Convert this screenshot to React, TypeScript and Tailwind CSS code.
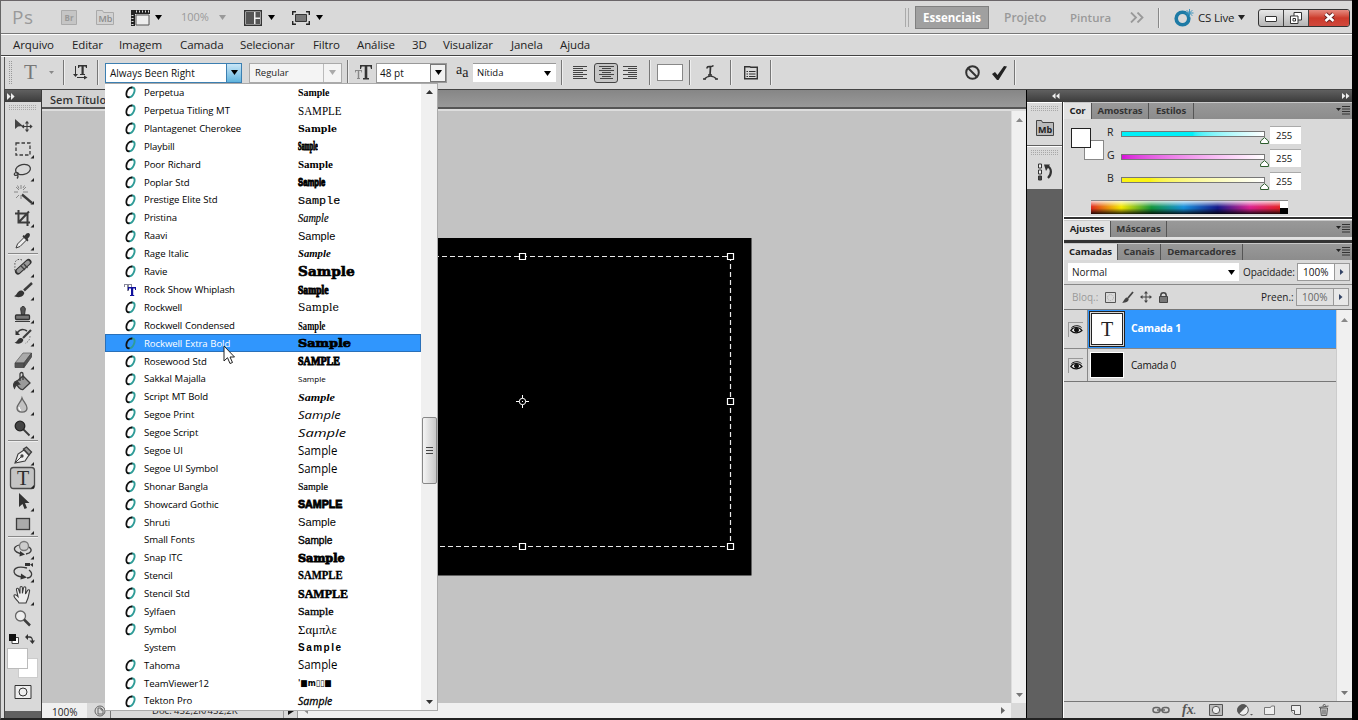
import type { ReactNode } from 'react'
import clsx from 'clsx'

type FontItem = {
  name: string
  kind?: 'o' | 'tt' | 'none'
  text?: string
  cls: string
}

const serif = "font-['Liberation_Serif',serif]"
const slab = "font-['DejaVu_Serif',serif]"
const sans = "font-['Liberation_Sans',sans-serif]"
const script = "font-['Open_Sans',sans-serif] italic"

const fonts: FontItem[] = [
  { name: 'Perpetua', cls: clsx(serif, 'text-[11px] font-bold scale-x-[0.9]') },
  { name: 'Perpetua Titling MT', text: 'SAMPLE', cls: clsx(serif, 'text-[12px] scale-x-[0.92]') },
  { name: 'Plantagenet Cherokee', cls: clsx(slab, 'text-[10px] font-bold scale-x-[0.94]') },
  { name: 'Playbill', cls: clsx(serif, 'text-[11.5px] font-black scale-x-[0.54] [-webkit-text-stroke:0.9px_#000]') },
  { name: 'Poor Richard', cls: clsx(serif, 'text-[11px] font-bold') },
  { name: 'Poplar Std', cls: clsx(sans, 'text-[11px] font-black scale-x-[0.7] [-webkit-text-stroke:1px_#000]') },
  { name: 'Prestige Elite Std', cls: "font-['Liberation_Mono',monospace] text-[11.5px] [-webkit-text-stroke:0.2px_#000] scale-x-[1.02]" },
  { name: 'Pristina', cls: clsx(serif, 'text-[12.5px] italic scale-x-[0.83] [-webkit-text-stroke:0.2px_#000]') },
  { name: 'Raavi', cls: clsx(sans, 'text-[11px]') },
  { name: 'Rage Italic', cls: clsx(serif, 'text-[10px] italic font-bold scale-x-[1.07]') },
  { name: 'Ravie', cls: clsx(slab, 'text-[12px] font-bold [-webkit-text-stroke:0.6px_#000] scale-x-[1.14]') },
  { name: 'Rock Show Whiplash', kind: 'tt', cls: clsx(serif, 'text-[13px] font-bold [-webkit-text-stroke:1px_#000] scale-x-[0.74]') },
  { name: 'Rockwell', cls: clsx(slab, 'text-[11px] scale-x-[0.98]') },
  { name: 'Rockwell Condensed', cls: clsx(serif, 'text-[12px] font-bold scale-x-[0.72]') },
  { name: 'Rockwell Extra Bold', cls: clsx(slab, 'text-[11px] font-bold [-webkit-text-stroke:0.7px_#000] scale-x-[1.16]') },
  { name: 'Rosewood Std', text: 'SAMPLE', cls: clsx(serif, 'text-[12px] font-bold [-webkit-text-stroke:0.9px_#000] scale-x-[0.84]') },
  { name: 'Sakkal Majalla', cls: "font-['Open_Sans',sans-serif] text-[8px]" },
  { name: 'Script MT Bold', cls: clsx(serif, 'text-[11px] font-bold italic scale-x-[1.1]') },
  { name: 'Segoe Print', cls: clsx(script, 'text-[11.5px] scale-x-[1.14]') },
  { name: 'Segoe Script', cls: clsx(script, 'text-[11.5px] scale-x-[1.28]') },
  { name: 'Segoe UI', cls: 'text-[12px] scale-x-[0.95]' },
  { name: 'Segoe UI Symbol', cls: 'text-[12px] scale-x-[0.95]' },
  { name: 'Shonar Bangla', cls: clsx(serif, 'text-[10px] [-webkit-text-stroke:0.2px_#000]') },
  { name: 'Showcard Gothic', text: 'SAMPLE', cls: clsx(sans, 'text-[11px] font-black [-webkit-text-stroke:0.8px_#000] scale-x-[0.97]') },
  { name: 'Shruti', cls: clsx(sans, 'text-[11px] scale-x-[1.02]') },
  { name: 'Small Fonts', kind: 'none', cls: clsx(sans, 'text-[11px] [-webkit-text-stroke:0.4px_#000] scale-x-[0.92]') },
  { name: 'Snap ITC', cls: clsx(slab, 'text-[10.5px] font-bold [-webkit-text-stroke:0.8px_#000] scale-x-[1.07]') },
  { name: 'Stencil', text: 'SAMPLE', cls: clsx(serif, 'text-[11.5px] font-bold [-webkit-text-stroke:0.3px_#000] scale-x-[0.93]') },
  { name: 'Stencil Std', text: 'SAMPLE', cls: clsx(serif, 'text-[12px] font-bold [-webkit-text-stroke:0.5px_#000]') },
  { name: 'Sylfaen', cls: clsx(serif, 'text-[11px] [-webkit-text-stroke:0.3px_#000] scale-x-[1.08]') },
  { name: 'Symbol', text: 'Σαμπλε', cls: clsx(serif, 'text-[12px] scale-x-[1.06]') },
  { name: 'System', kind: 'none', cls: clsx(sans, 'text-[10px] font-bold tracking-[1.5px]') },
  { name: 'Tahoma', cls: 'text-[12px] scale-x-[0.95]' },
  { name: 'TeamViewer12', text: "'■m▯▯■", cls: "font-['DejaVu_Sans',sans-serif] text-[9px] font-bold scale-x-[0.86]" },
  { name: 'Tekton Pro', cls: clsx(script, 'text-[10.5px] [-webkit-text-stroke:0.3px_#000]') },
]

const menus = [
  { label: 'Arquivo', w: 'w-[59px]' },
  { label: 'Editar', w: 'w-[47px]' },
  { label: 'Imagem', w: 'w-[61px]' },
  { label: 'Camada', w: 'w-[60px]' },
  { label: 'Selecionar', w: 'w-[73px]' },
  { label: 'Filtro', w: 'w-[44px]' },
  { label: 'Análise', w: 'w-[55px]' },
  { label: '3D', w: 'w-[31px]' },
  { label: 'Visualizar', w: 'w-[68px]' },
  { label: 'Janela', w: 'w-[49px]' },
  { label: 'Ajuda', w: 'w-[50px]' },
]

const channels = [
  { label: 'R', bar: 'bg-gradient-to-r from-[#00f0f8] from-50% to-white' },
  { label: 'G', bar: 'bg-gradient-to-r from-[#d80cd8] to-white' },
  { label: 'B', bar: 'bg-gradient-to-r from-[#fbf413] from-20% to-white' },
]

function Down({ className = 'fill-black' }: { className?: string }) {
  return (
    <svg width="7" height="5" viewBox="0 0 7 5" className={clsx('shrink-0', className)}>
      <path d="M0 0h7L3.500 5z" />
    </svg>
  )
}

function Up({ className = 'fill-[#333]' }: { className?: string }) {
  return (
    <svg width="7" height="4" viewBox="0 0 7 4" className={className}>
      <path d="M0 4h7L3.500 0z" />
    </svg>
  )
}

function Sep() {
  return <div className="h-[25px] w-[2px] shrink-0 border-l border-[#777] bg-[#eee]" />
}

function Grip() {
  return (
    <svg width="28" height="5" viewBox="0 0 28 5" stroke="#a8a8a8" strokeDasharray="1 1">
      <path d="M0 .5h28M0 2.500h28M0 4.500h28" />
    </svg>
  )
}

// one slot of the tool palette, drawn in a 36x23 box
function Tool({ children, corner = true, tall }: { children: ReactNode; corner?: boolean; tall?: boolean }) {
  return (
    <svg width="36" height="23" viewBox="0 0 36 23" fill="none" stroke="#3c3c3c" strokeWidth="1.3" className="shrink-0 overflow-visible">
      {tall && <rect x="5.500" y=".5" width="24" height="21" rx="3" fill="#c4c4c4" stroke="#4a4a4a" />}
      {children}
      {corner && <path d="M29 18v3.500h-3.500z" fill="#222" stroke="none" />}
    </svg>
  )
}

function ToolLine() {
  return <div className="mx-[3px] h-[2px] shrink-0 border-t border-[#888] bg-[#eee]" />
}

function Toolbar() {
  return (
    <div className="flex w-[37px] shrink-0 flex-col border-r border-[#3a3a3a] bg-[#d9d9d9]">
      <div className="flex h-[12px] shrink-0 items-center bg-gradient-to-b from-[#606060] to-[#3c3c3c] pl-[2px]">
        <svg width="8" height="7" viewBox="0 0 8 7" fill="#eee"><path d="M0 0l3.600 3.500L0 7zM4 0l3.600 3.500L4 7z" /></svg>
      </div>
      <div className="flex h-[12px] shrink-0 justify-center pt-[3px]"><Grip /></div>

      <div className="flex h-[139px] shrink-0 flex-col">
        <Tool corner={false}>
          <path d="M10 5v10l3-2.600 5-.5z" fill="#444" stroke="none" />
          <path d="M22 8v9M17.500 12.500h9M20.500 9.500L22 7.700l1.500 1.800M20.500 15.500l1.500 1.800 1.500-1.800M19 11l-1.800 1.500L19 14M25 11l1.800 1.500L25 14" strokeWidth="1.100" />
        </Tool>
        <Tool><rect x="11" y="6" width="14" height="12" strokeDasharray="3.500 2" /></Tool>
        <Tool>
          <ellipse cx="18" cy="9.500" rx="7.500" ry="5" transform="rotate(-12 18 9.500)" />
          <path d="M11 12.500c-3 1-1.500 4 1 2.500s1-2.500-.5-2.200M12.500 14.500c1 2 .5 3-.5 4" />
        </Tool>
        <Tool>
          <path d="M17 11.500l10 8.500" strokeWidth="2.300" />
          <path d="M16 2v4M16 12v4M9 9h4M18 9h5M11 4l3 3M21 4l-3 3M11 15l3-3M12.500 2.500l1.500 3M19.500 2.500L18 5" stroke="#888" strokeWidth="1" />
        </Tool>
        <Tool>
          <path d="M13.500 4v12.500H25M10 7.500h12.500V20M13.500 16.500L24 5.500" strokeWidth="2" />
        </Tool>
        <Tool>
          <path d="M11 19l1.500-4 7-7 2.500 2.500-7 7z" fill="#eee" strokeWidth="1" />
          <path d="M17.500 7.500l5 5 1-1.500-1-1 2-2.500c1.500-3-1-4.500-3-3l-2 2.200-1-.7z" fill="#333" stroke="none" />
        </Tool>
      </div>
      <ToolLine />

      <div className="flex h-[185px] shrink-0 flex-col pt-[1px]">
        <Tool>
          <path d="M17 4c-4-2-8 1-7 5 0 4-1 5 1 7" stroke="#555" strokeWidth="1" strokeDasharray="1.500 1.500" />
          <path d="M13 15.500L23.500 6" stroke="#333" strokeWidth="6" strokeLinecap="round" />
          <path d="M13.500 15L23 6.500" stroke="#999" strokeWidth="3.800" strokeLinecap="round" />
          <path d="M16 10l4 4M19 8l3.500 4" stroke="#444" />
        </Tool>
        <Tool>
          <path d="M19 11.500L27 4" strokeWidth="2.400" />
          <path d="M9 17c3-.5 3-5 7-5.500 2 0 4 2 3 3.500-1.500 3.500-7 4-10 2z" fill="#333" stroke="none" />
        </Tool>
        <Tool>
          <path d="M16 9c-2-6 6-6 4 0l-.5 4h-3z" fill="#555" stroke="#333" strokeWidth="1" />
          <rect x="10.500" y="13" width="14" height="4.500" rx="1" fill="#777" stroke="#333" />
          <path d="M10 19.500h15" strokeWidth="1" />
        </Tool>
        <Tool>
          <path d="M18 13L26 5" strokeWidth="2.200" />
          <path d="M9.500 17.500c3-.5 3-4 6-4.500 2 0 3.500 1.500 2.500 3-1.500 3-5.500 3.500-8.500 1.500z" fill="#333" stroke="none" />
          <path d="M12 8c3-4 7-4 10-2" strokeWidth="1.600" /><path d="M10.500 5v5h4.500z" fill="#333" stroke="none" />
          <path d="M25 11c0 4-2 6-5 7.500" stroke="#777" strokeDasharray="1.500 1.500" strokeWidth="1" />
        </Tool>
        <Tool>
          <path d="M10 15l8-10h8.500l-7.500 10z" fill="#aaa" stroke="#666" strokeWidth=".8" />
          <path d="M10 15h9v4.500h-9zM19 15l7.500-10v4L19 19.500z" fill="#555" stroke="#444" strokeWidth=".8" />
        </Tool>
        <Tool>
          <path d="M11 11l7-6 7 7-7 6.500c-2 1-7-4-7-7.500z" fill="#999" />
          <path d="M15 10V3c0-2 3-2 3 0v6" /><path d="M12 10c-4 1-4 5-2.500 7 1-3 2-4 5-4z" fill="#333" />
        </Tool>
        <Tool>
          <path d="M17 4c1.500 4 5 6.500 5 10 0 5.500-10 5.500-10 0 0-3.500 4-6 5-10z" fill="#c2c2c2" stroke="#666" />
          <path d="M14 13c0 2 1 3 2 3.500" stroke="#fff" />
        </Tool>
        <Tool><path d="M18.500 12.500l6 6" strokeWidth="1.800" /><circle cx="15" cy="9" r="4.800" fill="#444" stroke="#222" /></Tool>
      </div>
      <ToolLine />

      <div className="flex h-[94px] shrink-0 flex-col pt-[2px]">
        <Tool>
          <path d="M10 19l3-9 6-4 5 5-4 6z" fill="#eee" strokeWidth="1.100" /><path d="M10.500 18.500l6-6" strokeWidth="1" />
          <circle cx="17" cy="12" r="1" fill="#444" /><path d="M18.500 5l3-2 5 5-2.500 3z" fill="#999" />
        </Tool>
        <Tool tall>
          <text x="12" y="18" fill="#2c2c2c" stroke="none" className="font-['Liberation_Serif',serif] text-[20px]">T</text>
        </Tool>
        <Tool><path d="M14 3v14l3.500-3 2 5 2.500-1-2-5h4.500z" fill="#333" stroke="none" /></Tool>
        <Tool><rect x="11.500" y="5.500" width="13" height="11" fill="#aaa" /></Tool>
      </div>
      <ToolLine />

      <div className="flex h-[92px] shrink-0 flex-col">
        <Tool>
          <circle cx="19" cy="8" r="4.500" fill="#ccc" stroke="#777" />
          <path d="M14 7c-7 2-6 7 3 9M24 9c4 3 2 6-3 7" /><path d="M15 13l5 3.500-5.500 2z" fill="#333" stroke="none" />
        </Tool>
        <Tool>
          <path d="M22 7C11 4 7 9 10 13c2 2 5 3 9 3M24 9c5 4 2 8-2 8" /><path d="M16 12.500l6 4-6.500 2zM20 2h5v3h-5zM25 3.500L28 2v4z" fill="#333" stroke="none" />
        </Tool>
        <Tool>
          <path d="M14 19c-1-2-5-5-5-7s2-1.500 4 .5L11.500 6c-.4-2 1.700-2.400 2.200-.5L15 9.500V4c0-2 2.400-2 2.400 0v5.300L18.500 4c.4-2 2.600-1.500 2.300.4L20.500 10l2-3.500c1-1.500 2.600-.6 2 1L23 14l-2 5z" fill="#eee" strokeWidth="1.100" />
        </Tool>
        <Tool corner={false}>
          <circle cx="15.500" cy="9" r="5" fill="#eee" stroke="#666" /><path d="M19 12.500l6 6" strokeWidth="2.500" />
        </Tool>
      </div>

      <div className="flex h-[17px] shrink-0 items-center justify-between pl-[4px] pr-[6px]">
        <svg width="10" height="10" viewBox="0 0 10 10"><path d="M6 3.500h3.500v6H3V7" fill="#fff" stroke="#444" /><path d="M0 0h7v7H0z" fill="#111" /></svg>
        <svg width="10" height="10" viewBox="0 0 10 10" fill="none" stroke="#333" strokeWidth="1.300"><path d="M2 3h2.500C7 3 7.500 4.500 7.500 8" /><path d="M3 0v6L0 3zM4.500 6.500h5.500L7.500 10z" fill="#333" stroke="none" /></svg>
      </div>
      <div className="relative h-[33px] shrink-0">
        <div className="absolute left-[13px] top-[11px] size-[20px] border border-[#ccc] bg-white" />
        <div className="absolute left-[2px] top-[1px] size-[21px] border border-[#bbb] bg-white" />
      </div>
      <div className="flex h-[31px] shrink-0 justify-center pt-[5px]">
        <svg width="18" height="14" viewBox="0 0 18 14" fill="#eee" stroke="#333"><path d="M1 .5h16v13H1z" /><circle cx="9" cy="7" r="4" /></svg>
      </div>
      <div className="flex-1 bg-[#606060]" />
    </div>
  )
}

function AppBar() {
  return (
    <div className="flex h-[33px] shrink-0 items-center border-b border-[#777] pl-[11px] pt-[1px]">
      <span className="w-[49px] text-[19px] leading-none tracking-[0.5px] text-[#999]">Ps</span>
      <svg width="16" height="15" viewBox="0 0 16 15" className="mr-[19px]">
        <path d="M.5.500h15v14H.5z" fill="#c5c5c5" stroke="#aaa" />
        <text x="3.500" y="11" fill="#999" className="text-[8px] font-bold">Br</text>
      </svg>
      <svg width="18" height="15" viewBox="0 0 18 15" className="mr-[17px]">
        <path d="M.5.500h6l1 2h10v12H.5z" fill="#d2d2d2" stroke="#aaa" />
        <text x="2.500" y="12" fill="#8c8c8c" className="text-[9px] font-semibold">Mb</text>
      </svg>
      <svg width="19" height="16" viewBox="0 0 19 16" className="mr-[5px]">
        <path d="M5 5h13v10H5z" fill="#eee" stroke="#555" />
        <path d="M0 0h19v4H4v12H0z" fill="#222" />
        <path d="M5 1.500h14" stroke="#ddd" strokeDasharray="1 2" strokeWidth="2" /><path d="M1.500 5v11" stroke="#ddd" strokeDasharray="1 2" strokeWidth="2" />
      </svg>
      <Down />
      <span className="ml-[19px] w-[38px] text-[11px] text-[#999]">100%</span>
      <Down className="fill-[#999]" />
      <svg width="18" height="16" viewBox="0 0 18 16" className="ml-[18px] mr-[6px]">
        <path d="M.7.700h16.600v14.600H.7z" fill="#eee" stroke="#333" strokeWidth="1.400" />
        <path d="M2 2h8v12H2zM11.500 2H16v5.500h-4.500zM11.500 9H16v5h-4.500z" fill="#555" />
      </svg>
      <Down />
      <svg width="18" height="14" viewBox="0 0 18 14" className="ml-[17px] mr-[6px]">
        <path d="M.7 4V.7H4M14 .7h3.300V4M17.300 10v3.300H14M4 13.300H.7V10" fill="none" stroke="#222" strokeWidth="1.400" />
        <path d="M3.500 3.500h11v7h-11z" fill="#777" stroke="#333" />
      </svg>
      <Down />

      <div className="ml-[582px] flex h-[19px] w-[4px] border-x border-[#aaa]" />
      <div className="ml-[6px] flex h-[23px] w-[74px] items-center justify-center border border-[#808080] bg-[#a0a0a0] text-[11.5px] font-bold text-white">Essenciais</div>
      <span className="ml-[15px] w-[66px] text-[12px] font-semibold text-[#999]">Projeto</span>
      <span className="w-[60px] text-[11.5px] font-semibold text-[#999]">Pintura</span>
      <svg width="14" height="11" viewBox="0 0 14 11" fill="none" stroke="#999" strokeWidth="1.800"><path d="M1 .5l5 5-5 5M7.500 .5l5 5-5 5" /></svg>
      <div className="ml-[14px] h-[20px] w-[2px] border-l border-[#888] bg-[#eee]" />
      <svg width="20" height="18" viewBox="0 0 20 18" className="ml-[14px] mr-[4px]" fill="none">
        <circle cx="8.500" cy="9.500" r="6.300" stroke="#1d7aa5" strokeWidth="3.600" />
        <path d="M15.500 0v8M11.500 4h8M12.700 1.200l5.600 5.600M18.300 1.200l-5.600 5.600" stroke="#3b93bd" strokeWidth="1" />
      </svg>
      <span className="w-[40px] whitespace-nowrap text-[11.5px] tracking-[-0.2px] text-[#222]">CS Live</span>
      <Down className="fill-[#222]" />
      <div className="ml-[13px] flex h-[18px] w-[92px] overflow-hidden rounded-[3px] border border-[#333] bg-gradient-to-b from-[#e8e8e8] to-[#b5b5b5]">
        <div className="flex w-[25px] items-center justify-center border-r border-[#444] pt-[2px]"><div className="h-[6px] w-[12px] rounded-[1px] border border-[#333] bg-white" /></div>
        <div className="flex w-[25px] items-center justify-center border-r border-[#444]">
          <svg width="12" height="12" viewBox="0 0 12 12" fill="#fff" stroke="#333"><path d="M4 .5h7.500V8H4z" /><path d="M.5 4H8v7.500H.5z" /><path d="M3 6.500h2.500V9H3z" /></svg>
        </div>
        <div className="flex flex-1 items-center justify-center bg-gradient-to-b from-[#e58a80] via-[#cc3a2b] to-[#d0483c]">
          <svg width="13" height="11" viewBox="0 0 13 11"><path d="M2.500 2l8 7M10.500 2l-8 7" stroke="#622" strokeWidth="4.400" /><path d="M2.500 2l8 7M10.500 2l-8 7" stroke="#fff" strokeWidth="2.600" /></svg>
        </div>
      </div>
    </div>
  )
}

function AlignIcon({ d }: { d: string }) {
  return <svg width="15" height="14" viewBox="0 0 15 14" stroke="#444" strokeWidth="1.100"><path d={d} /></svg>
}

function OptionsBar() {
  return (
    <div className="flex h-[32px] shrink-0 items-center border-l border-[#555] pb-[1px] pl-[4px]">
      <svg width="4" height="24" viewBox="0 0 4 24" stroke="#999" strokeDasharray="1 1"><path d="M.5 0v24M2.500 0v24" /></svg>
      <span className="ml-[11px] w-[25px] font-['Liberation_Serif',serif] text-[21px] leading-none text-[#777]">T</span>
      <svg width="5" height="3" viewBox="0 0 5 3" fill="#888" className="mr-[9px]"><path d="M0 0h5L2.500 3z" /></svg>
      <Sep />
      <svg width="15" height="15" viewBox="0 0 15 15" className="ml-[8px] mr-[9px]" fill="#333">
        <path d="M2 1h1v8h2l-2.500 3L0 9h2zM5 0h9v3h-1l-.5-1.500h-1.800V9H12v1H7V9h1.500V1.500H6.500L6 3H5zM4 12h7v-1.500l3.500 2-3.500 2V13H4z" />
      </svg>
      <Sep />
      <div className="ml-[6px] flex h-[20px] w-[137px] border border-[#3c7fb1] bg-white text-[10px] leading-[18px] text-[#111]">
        <span className="w-[120px] whitespace-nowrap pl-[4px]">Always Been Right</span>
        <span className="flex flex-1 items-center justify-center border-l border-[#3c7fb1] bg-gradient-to-b from-[#c9e6f7] to-[#5fb4dd]"><Down /></span>
      </div>
      <div className="ml-[7px] flex h-[20px] w-[93px] border border-[#aaa] bg-[#f4f4f4] text-[9.5px] leading-[18px] text-[#222]">
        <span className="w-[74px] border-r border-[#bbb] pl-[5px]">Regular</span>
        <span className="flex flex-1 items-center justify-center"><Down className="fill-[#aaa]" /></span>
      </div>
      <div className="w-[5px]" />
      <Sep />
      <svg width="18" height="15" viewBox="0 0 18 15" className="ml-[6px] mr-[3px]" fill="#333">
        <path d="M5 0h12v4h-1l-.7-2.500H12.300V13H14v1.500H8V13h1.700V1.500H6.700L6 4H5z" />
        <path d="M0 5h7v2.500h-.7L6 6H4.200v7H5v1H2v-1h.8V6H1L.7 7.500H0z" fill="#888" />
      </svg>
      <div className="flex h-[20px] w-[71px] border border-[#999] bg-white text-[10px] leading-[18px] text-[#111]">
        <span className="w-[53px] pl-[3px]">48 pt</span>
        <span className="flex flex-1 items-center justify-center border border-[#777] bg-[#f2f2f2]"><Down /></span>
      </div>
      <span className="ml-[9px] flex w-[17px] font-['Liberation_Serif',serif] text-[14px] leading-none text-[#222]"><span className="-mt-[3px]">a</span><span>a</span></span>
      <div className="flex h-[19px] w-[83px] items-center justify-between border-t border-[#999] bg-white pl-[4px] pr-[5px] text-[9.5px] text-[#111]">Nítida<Down /></div>
      <div className="w-[5px]" />
      <Sep />
      <div className="ml-[10px] mr-[6px]"><AlignIcon d="M0 .5h14M0 2.500h10M0 4.500h14M0 6.500h10M0 8.500h14M0 10.500h10M0 12.500h14" /></div>
      <div className="flex h-[20px] w-[24px] items-center justify-center rounded-[3px] border border-[#444] bg-[#c6c6c6]"><AlignIcon d="M0 .5h15M3 2.500h9M0 4.500h15M3 6.500h9M0 8.500h15M3 10.500h9M1 12.500h13" /></div>
      <div className="ml-[5px] mr-[11px]"><AlignIcon d="M0 .5h14M5 2.500h9M0 4.500h14M5 6.500h9M0 8.500h14M5 10.500h9M0 12.500h14" /></div>
      <Sep />
      <div className="ml-[6px] mr-[6px] h-[17px] w-[26px] border border-[#888] bg-white" />
      <Sep />
      <svg width="15" height="17" viewBox="0 0 15 17" className="ml-[12px] mr-[12px]" fill="none" stroke="#333" strokeWidth="1.300">
        <path d="M4 4.500C4 1 8 4 10.500 1.500M7.500 3L7 11M5 11h4" strokeWidth="1.700" /><path d="M1 15.500c4-4.500 9-4.500 13 0M0 15h3M12 15h3" />
      </svg>
      <Sep />
      <svg width="14" height="15" viewBox="0 0 14 15" className="ml-[12px] mr-[12px]" fill="none" stroke="#333" strokeWidth="1.400">
        <path d="M.7 1.700h5l1 .500h6.600v11.500H.7z" /><path d="M5 6.500h6.500M5 9h6.500M5 11.500h6.500M2.500 6.500H4M2.500 9H4M2.500 11.500H4" strokeWidth="1" />
      </svg>
      <Sep />
      <svg width="15" height="15" viewBox="0 0 15 15" className="ml-[193px] mr-[12px]" fill="none" stroke="#333" strokeWidth="2"><circle cx="7.500" cy="7.500" r="6.300" /><path d="M3 3l9 9" /></svg>
      <svg width="15" height="14" viewBox="0 0 15 14" className="mr-[7px]" fill="#222"><path d="M0 8l3-2 2.500 3L12 0l3 .5L6.500 14H5z" /></svg>
      <Sep />
    </div>
  )
}

function FontIcon({ kind }: { kind: FontItem['kind'] }) {
  if (kind === 'none') return null
  if (kind === 'tt') {
    return (
      <svg width="13" height="14" viewBox="0 0 13 14">
        <path d="M0 1h8v3H7V2H5v6H3V2H1v2H0z" fill="#889" />
        <path d="M4 4h8v3h-1V5.500H9.200V12h1V13H6v-1h1V5.500H5V7H4z" fill="#11119c" />
      </svg>
    )
  }
  return (
    <svg width="13" height="13" viewBox="0 0 13 13" fill="none">
      <path d="M7.300 1.700C10.800.8 11.300 4 9.800 7.300 8.600 10 6.800 11.300 5 11.300" stroke="#2f9c98" strokeWidth="1.900" />
      <path d="M8.300 1.500C5 1.300 2.900 4.300 2.400 7.300c-.4 2.600.7 4.200 3.100 3.900" stroke="#111" strokeWidth="1.800" />
    </svg>
  )
}

function FontMenu() {
  return (
    <div className="absolute left-[105px] top-[83px] flex h-[628px] w-[333px] border-y border-r border-[#aaa] bg-white">
      <div className="flex w-[316px] flex-col">
        {fonts.map((f) => {
          const active = f.name === 'Rockwell Extra Bold'
          return (
            <div key={f.name} className={clsx('flex min-h-0 flex-1 items-center', active && 'bg-[#3096fd] inset-ring inset-ring-[#2a70b8]')}>
              <span className="ml-[19px] w-[20px]"><FontIcon kind={f.kind} /></span>
              <span className={clsx('w-[154px] whitespace-nowrap text-[9.6px] leading-none tracking-[-0.1px] [word-spacing:0.4px]', active ? 'text-white' : 'text-black')}>{f.name}</span>
              <span className={clsx('origin-left whitespace-nowrap leading-none text-black', f.cls)}>{f.text ?? 'Sample'}</span>
            </div>
          )
        })}
      </div>
      <div className="flex flex-1 flex-col items-center bg-[#f0f0f0] pt-[6px]">
        <Up />
        <div className="mt-[323px] flex h-[67px] w-[15px] items-center justify-center rounded-[2px] border border-[#888] bg-gradient-to-r from-[#f5f5f5] to-[#c8c8c8]">
          <svg width="7" height="8" viewBox="0 0 7 8" stroke="#444"><path d="M0 .5h7M0 3.500h7M0 6.500h7" /></svg>
        </div>
        <div className="mt-[216px]"><svg width="7" height="4" viewBox="0 0 7 4" fill="#333"><path d="M0 0h7L3.500 4z" /></svg></div>
      </div>
      <svg width="12" height="20" viewBox="0 0 12 20" className="absolute left-[118px] top-[261px]"><path d="M1 1v15l3.500-3.300L7 18.500l2.500-1L7 12h4.500z" fill="#fff" stroke="#222" /></svg>
    </div>
  )
}

function Artboard() {
  return (
    <svg width="459" height="338" viewBox="293 238 459 338" className="absolute left-[251px] top-[148px]" fill="none" stroke="#fff">
      <path d="M293 238h458.500v337.500H293z" fill="#000" stroke="none" />
      <path d="M314 256.500h416.500v290H314z" strokeDasharray="5 3" stroke="#e8e8e8" strokeWidth="1.200" />
      <path d="M519.500 253.500h6v6h-6zM727.500 253.500h6v6h-6zM727.500 398.500h6v6h-6zM727.500 543.500h6v6h-6zM519.500 543.500h6v6h-6z" fill="#000" strokeWidth="1.200" />
      <circle cx="522.500" cy="401.500" r="3.200" />
      <path d="M522.500 395v3.500M522.500 404.500v3.500M516 401.500h3.500M525.500 401.500h3.500" />
      <path d="M522 401h1v1h-1z" fill="#fff" stroke="none" />
    </svg>
  )
}

function Document() {
  return (
    <div className="relative flex min-w-0 flex-1 flex-col overflow-hidden">
      <div className="flex h-[19px] shrink-0 border-b-2 border-[#555] bg-gradient-to-b from-[#868686] to-[#999]">
        <div className="w-[130px] whitespace-nowrap bg-[#d2d2d2] pl-[8px] text-[11px] font-semibold leading-[20px] text-[#333]">Sem Título</div>
      </div>
      <div className="h-[2px] shrink-0 bg-[#ddd]" />
      <div className="flex min-h-0 flex-1">
        <div className="flex-1 bg-[#c3c3c3]" />
        <div className="flex w-[15px] flex-col items-center justify-between border-l border-[#ddd] bg-[#f0f0f0] pb-[6px] pt-[7px]">
          <Up className="fill-[#888]" />
          <svg width="7" height="4" viewBox="0 0 7 4" fill="#777"><path d="M0 0h7L3.500 4z" /></svg>
        </div>
      </div>
      <div className="flex h-[15px] shrink-0 items-center bg-[#d9d9d9] text-[10px] leading-none text-[#222]">
        <span className="flex h-full w-[45px] items-center bg-[#f0f0f0] pl-[10px] pt-[2px] text-[10px]">100%</span>
        <svg width="12" height="12" viewBox="0 0 12 12" className="ml-[7px] mr-[4px]" fill="none" stroke="#666"><circle cx="6" cy="6" r="5" /><path d="M4 9V3h3l2 2v4zM7 3v2h2" /></svg>
        <div className="h-full w-[42px] border-l border-[#777]" />
        <span className="w-[131px] whitespace-nowrap text-[9.5px]">Doc: 452,2K/452,2K</span>
        <div className="flex h-full w-[15px] items-center justify-center border-x border-[#999]"><svg width="6" height="8" viewBox="0 0 6 8" fill="#111"><path d="M0 0v8l6-4z" /></svg></div>
        <div className="flex h-full flex-1 items-center justify-between bg-[#f0f0f0] px-[6px]">
          <svg width="4" height="7" viewBox="0 0 4 7" fill="#888"><path d="M4 0v7L0 3.500z" /></svg>
          <svg width="4" height="7" viewBox="0 0 4 7" fill="#666"><path d="M0 0v7l4-3.500z" /></svg>
        </div>
        <div className="h-full w-[15px]" />
      </div>
      <Artboard />
    </div>
  )
}

function PanelTabs({ tabs }: { tabs: { label: string; w: string }[] }) {
  return (
    <div className="flex h-[17px] shrink-0 items-stretch border-t border-[#c8c8c8] bg-gradient-to-b from-[#999] to-[#8c8c8c] text-[9.6px] font-bold leading-[15px] text-[#222]">
      {tabs.map((t, i) => (
        <div key={t.label} className={clsx('flex justify-center whitespace-nowrap border-r border-[#555] tracking-[-0.1px]', t.w, i === 0 ? 'bg-[#e2e2e2]' : 'text-[#333]')}>{t.label}</div>
      ))}
      <svg width="14" height="9" viewBox="0 0 14 9" className="ml-auto mr-[2px] mt-[3px]"><path d="M0 2h5L2.500 5z" fill="#222" /><path d="M6 .5h8M6 3h8M6 5.500h8M6 8h8" stroke="#333" /></svg>
    </div>
  )
}

function ColorPanel() {
  return (
    <div className="h-[97px] shrink-0 px-[7px] pt-[4px]">
      <div className="flex h-[75px]">
        <div className="relative w-[36px]">
          <div className="absolute left-[13px] top-[17px] size-[20px] border border-[#888] bg-white" />
          <div className="absolute left-0 top-[5px] size-[20px] border border-[#222] bg-white" />
        </div>
        <div className="flex flex-col">
          {channels.map((c) => (
            <div key={c.label} className="flex h-[23px] items-start">
              <span className="w-[14px] pt-[1px] text-[10.5px] leading-[16px] text-[#222]">{c.label}</span>
              <div className="w-[149px] pt-[8px]">
                <div className={clsx('h-[6px] w-[144px] border border-[#777]', c.bar)} />
                <svg width="9" height="7" viewBox="0 0 9 7" className="ml-[139px]"><path d="M4.500 .6L8.400 4v2.500H.6V4z" fill="#fff" stroke="#2c5c2c" /></svg>
              </div>
              <div className="mt-[3px] h-[18px] w-[31px] border-t border-[#aaa] bg-white pl-[6px] text-[9.5px] leading-[17px] text-[#111]">255</div>
            </div>
          ))}
        </div>
      </div>
      <div className="ml-[20px] mt-[2px] flex h-[14px] w-[197px] border-t border-[#888]">
        <div className="w-[189px] bg-[linear-gradient(to_bottom,rgba(255,255,255,0.8),rgba(255,255,255,0)_45%,rgba(0,0,0,0)_55%,rgba(0,0,0,0.85)),linear-gradient(to_right,#e02a1c,#f5e800_16%,#12963c_32%,#1590dc_49%,#15188c_67%,#dc2090_84%,#e52222)]" />
        <div className="flex-1 bg-[linear-gradient(to_bottom,#fff_50%,#000_50%)]" />
      </div>
    </div>
  )
}

function Percent({ dim }: { dim?: boolean }) {
  return (
    <div className={clsx('flex h-[18px] w-[53px] border border-[#999] text-[10px] leading-[16px]', dim ? 'bg-[#e0e0e0] text-[#666]' : 'bg-white text-[#111]')}>
      <span className="w-[36px] pl-[5px]">100%</span>
      <span className="flex flex-1 items-center justify-center border-l border-[#999] bg-[#e8e8e8]"><svg width="4" height="6" viewBox="0 0 4 6" fill="#346"><path d="M0 0v6l3.500-3z" /></svg></span>
    </div>
  )
}

function Eye() {
  return (
    <div className="flex size-[15px] items-center justify-center border-l border-t border-[#999]">
      <svg width="13" height="10" viewBox="0 0 13 10" fill="none" stroke="#111"><path d="M.8 5.500C3 1.500 9 1.500 12 5.500 9 8.500 4 8.800.8 5.500z" fill="#eee" strokeWidth="1.200" /><circle cx="6.500" cy="5" r="2" fill="#111" /><path d="M1.500 2.500C5 0 9 .3 11.500 2.500" /></svg>
    </div>
  )
}

function LayersPanel() {
  return (
    <div className="flex min-h-0 flex-1 flex-col">
      <div className="flex h-[25px] shrink-0 items-center border-b border-[#888] pl-[4px]">
        <div className="flex h-[18px] w-[171px] items-center justify-between bg-white pr-[4px] text-[10px] text-[#222]">
          <span className="pl-[4px]">Normal</span><Down />
        </div>
        <span className="ml-[4px] w-[54px] whitespace-nowrap text-[10px] tracking-[-0.1px] text-[#222]">Opacidade:</span>
        <Percent />
      </div>
      <div className="flex h-[25px] shrink-0 items-center border-b border-[#777] pl-[8px]">
        <span className="w-[33px] text-[10px] text-[#999]">Bloq.:</span>
        <svg width="11" height="11" viewBox="0 0 11 11" className="mr-[6px]" fill="none" stroke="#555"><path d="M.5.500h10v10H.5z" /><circle cx="5.500" cy="5.500" r="3" stroke="#aaa" strokeDasharray="1 1" /></svg>
        <svg width="12" height="12" viewBox="0 0 12 12" className="mr-[6px]"><path d="M6 7l5-6" stroke="#444" strokeWidth="1.800" /><path d="M0 11.500C2 11 2 7 5 6.500c2 .5 2 2.500 1 3.500-1.500 1.500-4 2-6 1.500z" fill="#444" /></svg>
        <svg width="12" height="12" viewBox="0 0 12 12" className="mr-[7px]" stroke="#444" fill="#444"><path d="M6 1v10M1 6h10" /><path d="M6 0l2 2.500H4zM6 12l2-2.500H4zM0 6l2.500-2v4zM12 6L9.500 4v4z" stroke="none" /></svg>
        <svg width="9" height="11" viewBox="0 0 9 11"><path d="M1.800 5V3.500a2.700 2.700 0 015.400 0V5" fill="none" stroke="#444" strokeWidth="1.500" /><path d="M.5 4.500h8v6h-8z" fill="#777" stroke="#444" /></svg>
        <span className="ml-[93px] w-[35px] text-[10px] text-[#222]">Preen.:</span>
        <Percent dim />
      </div>
      <div className="flex min-h-0 flex-1">
        <div className="w-[272px]">
          <div className="flex h-[39px] border-b border-[#888]">
            <div className="flex w-[24px] items-center justify-center border-r border-[#888]"><Eye /></div>
            <div className="flex flex-1 items-center bg-[#3096fd] pl-[1px]">
              <div className="flex size-[36px] items-center justify-center border border-[#222] bg-[#d9d9d9]">
                <div className="flex size-[32px] items-center justify-center border border-[#222] bg-white font-['Liberation_Serif',serif] text-[20px] text-[#222]">T</div>
              </div>
              <span className="pl-[6px] text-[10.5px] font-bold tracking-[-0.15px] text-white">Camada 1</span>
            </div>
          </div>
          <div className="flex h-[33px] border-b border-[#777]">
            <div className="flex w-[24px] items-center justify-center border-r border-[#888]"><Eye /></div>
            <div className="flex flex-1 items-center pl-[2px]">
              <div className="h-[26px] w-[34px] border border-white bg-black" />
              <span className="pl-[7px] text-[10px] tracking-[-0.2px] text-[#111]">Camada 0</span>
            </div>
          </div>
        </div>
        <div className="flex flex-1 flex-col items-center justify-between border-l border-[#ccc] bg-[#f0f0f0] pb-[6px] pt-[8px]">
          <Up className="fill-[#888]" />
          <svg width="7" height="4" viewBox="0 0 7 4" fill="#777"><path d="M0 0h7L3.500 4z" /></svg>
        </div>
      </div>
      <div className="flex h-[17px] shrink-0 items-center border-t border-[#777] pl-[88px]">
        <svg width="18" height="8" viewBox="0 0 18 8" fill="none" stroke="#666" strokeWidth="1.500"><rect x="1" y="1.500" width="7" height="5" rx="2.500" /><rect x="10" y="1.500" width="7" height="5" rx="2.500" /><path d="M5 4h8" /></svg>
        <span className="ml-[12px] w-[18px] font-['Liberation_Serif',serif] text-[14px] font-bold italic leading-none text-[#555]">fx<span className="text-[9px]">.</span></span>
        <svg width="14" height="12" viewBox="0 0 14 12" className="ml-[9px]" stroke="#555"><path d="M.5.500h13v11H.5z" fill="#bbb" /><circle cx="7" cy="6" r="3.700" fill="#eee" /></svg>
        <svg width="17" height="12" viewBox="0 0 17 12" className="ml-[14px]"><circle cx="6" cy="6" r="5.300" fill="#eee" stroke="#555" /><path d="M2 10L10 2A5.300 5.300 0 002 2a5.300 5.300 0 000 8z" fill="#555" /><path d="M13 10h3l-1.500 1.500z" fill="#555" /></svg>
        <svg width="11" height="10" viewBox="0 0 11 10" className="ml-[10px]" fill="#eee" stroke="#777"><path d="M.5 2.500h6l1-1.500h3v8.500H.5z" /></svg>
        <svg width="10" height="10" viewBox="0 0 10 10" className="ml-[16px]" fill="#eee" stroke="#555"><path d="M.5.500h9v9H4L.5 6z" /><path d="M3.500 9.500v-4h-3" /></svg>
        <svg width="10" height="12" viewBox="0 0 10 12" className="ml-[18px]" fill="#ccc" stroke="#555"><path d="M1.500 4h7l-.8 7.500H2.300zM0 3.500L9.500 2M4 2c0-2 2.500-2 2.500-.5M4 5.500v5M6 5.500v5" /></svg>
      </div>
    </div>
  )
}

function RightDock() {
  return (
    <div className="flex w-[326px] shrink-0 flex-col border-l border-black bg-[#d9d9d9]">
      <div className="flex h-[12px] shrink-0 items-center justify-between bg-gradient-to-b from-[#606060] to-[#3c3c3c] pl-[25px] pr-[2px]">
        <svg width="8" height="6" viewBox="0 0 8 6" fill="#eee"><path d="M3.500 0v6L0 3zM7.500 0v6L4 3z" /></svg>
        <svg width="8" height="6" viewBox="0 0 8 6" fill="#eee"><path d="M0 0v6l3.500-3zM4 0v6l3.500-3z" /></svg>
      </div>
      <div className="flex min-h-0 flex-1">
        <div className="flex w-[36px] shrink-0 flex-col border-r border-[#333] bg-[#606060]">
          <div className="flex h-[43px] flex-col items-center border-t border-white bg-[#d9d9d9] pt-[3px]">
            <Grip />
            <svg width="18" height="17" viewBox="0 0 18 17" className="mt-[8px]"><path d="M.5 1.500h5l1 2h11v13H.5z" fill="#bbb" stroke="#444" /><text x="2" y="13.500" fill="#222" className="text-[9px] font-bold">Mb</text></svg>
          </div>
          <div className="mt-px flex h-[43px] flex-col items-center border-t border-white bg-[#d9d9d9] pt-[3px]">
            <Grip />
            <svg width="16" height="18" viewBox="0 0 16 18" className="mt-[8px]" fill="#eee" stroke="#333"><path d="M1.500 1h3v4h-3zM1.500 7h3v4h-3z" /><path d="M1.500 13h3v4h-3z" fill="#444" /><path d="M10 3c5 2 5 8 1 12" fill="none" strokeWidth="2.200" /><path d="M7 1.500h6L9 8z" fill="#333" stroke="none" /></svg>
          </div>
        </div>
        <div className="flex min-w-0 flex-1 flex-col border-l border-white">
          <PanelTabs tabs={[{ label: 'Cor', w: 'w-[28px]' }, { label: 'Amostras', w: 'w-[57px]' }, { label: 'Estilos', w: 'w-[45px]' }]} />
          <ColorPanel />
          <div className="h-[4px] shrink-0 border-b border-t border-white bg-[#333]" />
          <PanelTabs tabs={[{ label: 'Ajustes', w: 'w-[47px]' }, { label: 'Máscaras', w: 'w-[56px]' }]} />
          <div className="h-[6px] shrink-0 border-b-[3px] border-t-2 border-b-[#333] border-t-[#e2e2e2]" />
          <PanelTabs tabs={[{ label: 'Camadas', w: 'w-[54px]' }, { label: 'Canais', w: 'w-[43px]' }, { label: 'Demarcadores', w: 'w-[82px]' }]} />
          <LayersPanel />
        </div>
      </div>
    </div>
  )
}

export default function App() {
  return (
    <div className="relative flex h-[720px] w-[1358px] overflow-hidden border-r-[6px] border-black bg-[#d9d9d9] font-['Open_Sans',sans-serif] text-[#222]">
      <div className="flex min-w-0 flex-1 flex-col border-b-2 border-l border-t border-b-[#222] border-l-[#666] border-t-[#6b6669]">
        <AppBar />
        <div className="flex h-[22px] shrink-0 items-center border-b border-[#444] border-t border-t-white pl-[12px] text-[11.5px]">
          {menus.map((m) => (
            <span key={m.label} className={clsx('whitespace-nowrap tracking-[-0.1px]', m.w)}>{m.label}</span>
          ))}
        </div>
        <div className="flex min-h-0 flex-1 flex-col border-t border-white pl-[3px]">
          <OptionsBar />
          <div className="flex min-h-0 flex-1 border-l border-t border-[#444]">
            <Toolbar />
            <Document />
            <RightDock />
          </div>
        </div>
      </div>
      <FontMenu />
    </div>
  )
}
